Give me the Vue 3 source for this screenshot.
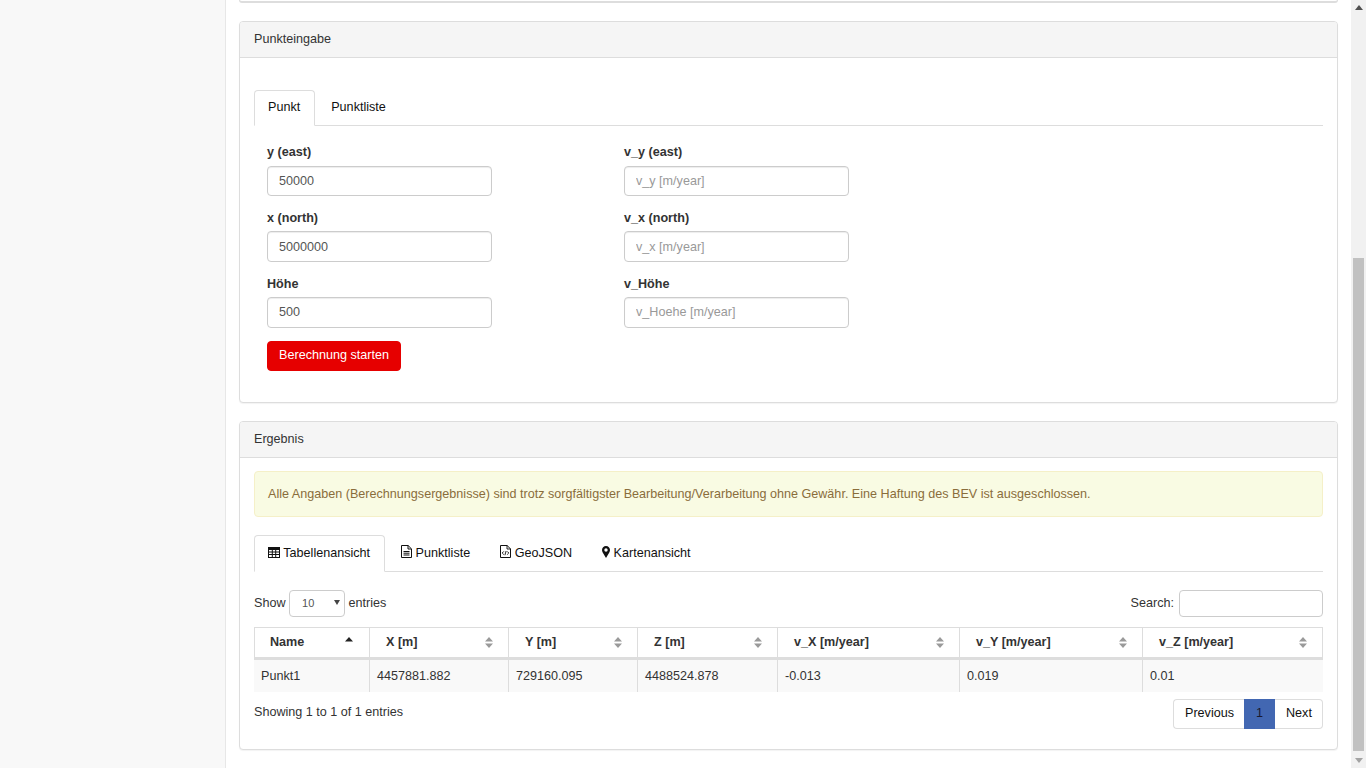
<script setup>
const columns = [
  { name: 'Name', width: 116, active: true },
  { name: 'X [m]', width: 139 },
  { name: 'Y [m]', width: 129 },
  { name: 'Z [m]', width: 140 },
  { name: 'v_X [m/year]', width: 182 },
  { name: 'v_Y [m/year]', width: 183 },
  { name: 'v_Z [m/year]', width: 180 }
]
const row = ['Punkt1', '4457881.882', '729160.095', '4488524.878', '-0.013', '0.019', '0.01']
const fields = [
  { label: 'y (east)', value: '50000', placeholder: '' },
  { label: 'v_y (east)', value: '', placeholder: 'v_y [m/year]' },
  { label: 'x (north)', value: '5000000', placeholder: '' },
  { label: 'v_x (north)', value: '', placeholder: 'v_x [m/year]' },
  { label: 'Höhe', value: '500', placeholder: '' },
  { label: 'v_Höhe', value: '', placeholder: 'v_Hoehe [m/year]' }
]
</script>

<template>
  <div class="page">
    <aside class="sidebar"></aside>
    <main class="main">
      <div class="panel-stub"></div>

      <section class="panel first">
        <header class="panel-heading">Punkteingabe</header>
        <div class="panel-body input-body">
          <nav class="tabs">
            <a class="tab active">Punkt</a>
            <a class="tab">Punktliste</a>
          </nav>
          <form class="point-form" @submit.prevent>
            <div class="field-grid">
              <div v-for="f in fields" :key="f.label" class="field">
                <label>{{ f.label }}</label>
                <input type="text" :value="f.value" :placeholder="f.placeholder" />
              </div>
            </div>
            <button class="btn-start" type="submit">Berechnung starten</button>
          </form>
        </div>
      </section>

      <section class="panel">
        <header class="panel-heading">Ergebnis</header>
        <div class="panel-body result-body">
          <div class="alert">Alle Angaben (Berechnungsergebnisse) sind trotz sorgfältigster Bearbeitung/Verarbeitung ohne Gewähr. Eine Haftung des BEV ist ausgeschlossen.</div>
          <nav class="tabs result-tabs">
            <a class="tab active icon-tab">
              <svg width="12" height="11" viewBox="0 0 12 11"><path fill-rule="evenodd" fill="#111" d="M0 0h12v11H0zM1 3v1.500h2.800V3zm3.800 0v1.500h2.400V3zm3.400 0v1.500H11V3zM1 5.500V7h2.800V5.500zm3.800 0V7h2.400V5.500zm3.400 0V7H11V5.500zM1 8v2h2.800V8zm3.800 0v2h2.400V8zm3.400 0v2H11V8z"/></svg>
              Tabellenansicht
            </a>
            <a class="tab icon-tab">
              <svg width="11" height="13" viewBox="0 0 11 13"><path fill="none" stroke="#111" d="M.5.500h6.600l3.400 3.400v8.600H.5z"/><path fill="none" stroke="#111" d="M7 .5v3.500h3.500M2.500 6.500h6M2.500 8.200h6M2.500 10h6"/></svg>
              Punktliste
            </a>
            <a class="tab icon-tab">
              <svg width="11" height="13" viewBox="0 0 11 13"><path fill="none" stroke="#111" d="M.5.500h6.600l3.400 3.400v8.600H.5z"/><path fill="none" stroke="#111" stroke-width=".9" d="M7 .5v3.500h3.500M3.800 6.400 2.200 8l1.600 1.600M7.200 6.400 8.800 8 7.200 9.600M6.100 6 4.900 10.200"/></svg>
              GeoJSON
            </a>
            <a class="tab icon-tab">
              <svg width="8" height="12" viewBox="0 0 8 12"><path fill-rule="evenodd" fill="#111" d="M4 0C1.700 0 0 1.700 0 4c0 1 .3 1.600.7 2.400L4 12l3.300-5.600C7.700 5.600 8 5 8 4c0-2.300-1.700-4-4-4zm0 2.300a1.700 1.700 0 1 1 0 3.400 1.700 1.700 0 0 1 0-3.400z"/></svg>
              Kartenansicht
            </a>
          </nav>

          <div class="dt-controls">
            <div class="dt-length">
              Show
              <span class="fake-select">10<svg width="6" height="5" viewBox="0 0 6 5"><path fill="#444" d="M0 0h6L3 5z"/></svg></span>
              entries
            </div>
            <div class="dt-search">Search: <input type="text" /></div>
          </div>

          <table class="dt">
            <colgroup>
              <col v-for="c in columns" :key="c.name" :style="{ width: c.width + 'px' }" />
            </colgroup>
            <thead>
              <tr>
                <th v-for="c in columns" :key="c.name">
                  <span class="th-inner">
                    {{ c.name }}
                    <svg v-if="c.active" class="sort-active" width="8" height="5" viewBox="0 0 8 5"><path fill="#222" d="M4 0 8 4.500H0z"/></svg>
                    <svg v-else width="8" height="11" viewBox="0 0 8 11"><path fill="#9a9a9a" d="M4 0 8 4.500H0zM0 6.500h8L4 11z"/></svg>
                  </span>
                </th>
              </tr>
            </thead>
            <tbody>
              <tr>
                <td v-for="(v, i) in row" :key="i">{{ v }}</td>
              </tr>
            </tbody>
          </table>

          <div class="dt-footer">
            <div class="dt-info">Showing 1 to 1 of 1 entries</div>
            <div class="pagination">
              <a class="page-btn prev">Previous</a>
              <a class="page-btn current">1</a>
              <a class="page-btn next">Next</a>
            </div>
          </div>
        </div>
      </section>
    </main>
    <div class="scrollbar">
      <svg class="arrow" width="8" height="5" viewBox="0 0 8 5"><path fill="#505050" d="M4 0 8 5H0z"/></svg>
      <div class="track"><div class="thumb"></div></div>
      <svg class="arrow" width="8" height="5" viewBox="0 0 8 5"><path fill="#a3a3a3" d="M0 0h8L4 5z"/></svg>
    </div>
  </div>
</template>

<style>
html, body { margin: 0; overflow: hidden; background: #fff; }
</style>

<style scoped>
.page {
  display: flex;
  width: 1366px;
  height: 768px;
  overflow: hidden;
  font-family: "Liberation Sans", Arial, sans-serif;
  font-size: 12.6px;
  line-height: 18px;
  color: #333;
  background: #fff;
}
.sidebar {
  width: 225px;
  flex: none;
  background: #f8f8f8;
  border-right: 1px solid #e7e7e7;
}
.main {
  flex: 1;
  min-width: 0;
  padding: 0 13px;
}
.panel-stub {
  height: 3px;
  box-sizing: border-box;
  border: 1px solid #ddd;
  border-top: 0;
  border-bottom-width: 2px;
  border-radius: 0 0 4px 4px;
  margin-bottom: 18px;
}
.panel {
  border: 1px solid #ddd;
  border-radius: 4px;
  box-shadow: 0 1px 1px rgba(0, 0, 0, .05);
  background: #fff;
}
.panel.first { margin-bottom: 18px; }
.panel-heading {
  box-sizing: border-box;
  height: 36px;
  padding: 8px 14px;
  background: #f5f5f5;
  border-bottom: 1px solid #ddd;
  border-radius: 3px 3px 0 0;
}
.input-body { padding: 32px 14px 31px; }
.result-body { padding: 13px 14px 20px; }

.tabs {
  display: flex;
  height: 36px;
  box-sizing: border-box;
  border-bottom: 1px solid #ddd;
}
.tab {
  box-sizing: border-box;
  height: 36px;
  padding: 7px 13px;
  color: #111;
  border: 1px solid transparent;
  border-radius: 4px 4px 0 0;
  white-space: nowrap;
}
.tab + .tab { margin-left: 2px; }
.tab.active {
  background: #fff;
  border-color: #ddd #ddd #fff;
  padding-right: 14px;
}
.result-tabs { height: 37px; margin-top: 18px; }
.result-tabs .tab { height: 37px; padding-top: 8px; }
.icon-tab svg { vertical-align: -1px; }

.point-form { padding: 16.700px 0 0 13px; }
.field-grid {
  display: grid;
  grid-template-columns: 357px 357px;
}
.field { height: 65.700px; }
.field label {
  display: block;
  font-weight: 700;
  line-height: 19px;
  padding-top: .5px;
  margin-bottom: 3.500px;
}
.field input {
  display: block;
  box-sizing: border-box;
  width: 225px;
  height: 30.600px;
  padding: 0 11px;
  border: 1px solid #ccc;
  border-radius: 4px;
  box-shadow: inset 0 1px 1px rgba(0, 0, 0, .075);
  font: inherit;
  color: #555;
  outline: none;
}
.field input::placeholder { color: #999; opacity: 1; }
.btn-start {
  display: block;
  box-sizing: border-box;
  width: 134px;
  height: 30px;
  margin-top: 1.200px;
  padding: 0 0 2px;
  border: 1px solid #e60000;
  border-radius: 4px;
  background: #e60000;
  color: #fff;
  font: inherit;
}

.alert {
  box-sizing: border-box;
  height: 46px;
  padding: 13px;
  background: #f9fbe3;
  border: 1px solid #f5f0c8;
  border-radius: 4px;
  color: #8a6d3b;
}

.dt-controls {
  display: flex;
  justify-content: space-between;
  align-items: center;
  height: 30px;
  margin-top: 16px;
}
.dt-length { display: flex; align-items: center; gap: 3.500px; }
.fake-select {
  box-sizing: border-box;
  width: 56px;
  height: 27px;
  margin-top: 2px;
  display: flex;
  align-self: flex-start;
  align-items: center;
  justify-content: space-between;
  padding: 0 4px 0 12px;
  border: 1px solid #ccc;
  border-radius: 4px;
  font-size: 11px;
  color: #555;
}
.fake-select svg { margin-top: -2px; }
.dt-length, .dt-search { height: 30px; }
.dt-search { display: flex; align-items: center; gap: 5px; }
.dt-search input {
  box-sizing: border-box;
  width: 144px;
  height: 27px;
  margin-top: 2px;
  align-self: flex-start;
  border: 1px solid #ccc;
  border-radius: 4px;
  outline: none;
}

.dt {
  width: 1069px;
  table-layout: fixed;
  border-collapse: separate;
  border-spacing: 0;
  margin-top: 9px;
}
.dt th {
  box-sizing: border-box;
  height: 33px;
  padding: 0 15px 0 16px;
  text-align: left;
  font-weight: 700;
  border-top: 1px solid #ddd;
  border-right: 1px solid #ddd;
  border-bottom: 3px solid #ddd;
}
.dt th:first-child { border-left: 1px solid #ddd; padding-left: 15px; }
.th-inner { display: flex; justify-content: space-between; align-items: center; }
.sort-active { margin-top: -6px; margin-right: 1px; }
.dt td {
  box-sizing: border-box;
  height: 32px;
  padding: 0 7px;
  background: #f9f9f9;
  border-right: 1px solid #ddd;
}
.dt td:last-child { border-right: 0; }

.dt-footer {
  display: flex;
  justify-content: space-between;
  align-items: flex-start;
  margin-top: 7px;
}
.dt-info { padding-top: 4px; }
.pagination { display: flex; height: 30px; box-sizing: border-box; }
.page-btn {
  box-sizing: border-box;
  height: 30px;
  padding: 4px 11px;
  color: #111;
  background: #fff;
  border: 1px solid #ddd;
}
.prev { width: 71px; border-right: 0; border-radius: 4px 0 0 4px; }
.current { width: 31px; padding: 4px 0; text-align: center; background: #4267b2; border-color: #4267b2; color: #1a1a2e; }
.next { width: 48px; border-left: 0; border-radius: 0 4px 4px 0; }

.scrollbar {
  width: 15px;
  flex: none;
  display: flex;
  flex-direction: column;
  align-items: center;
  background: #f1f1f1;
}
.arrow { flex: none; margin: 5px 0; }
.track { flex: 1; width: 100%; display: flex; flex-direction: column; justify-content: flex-end; }
.thumb { height: 493px; margin: 0 2px 2px; background: #c1c1c1; }
</style>
